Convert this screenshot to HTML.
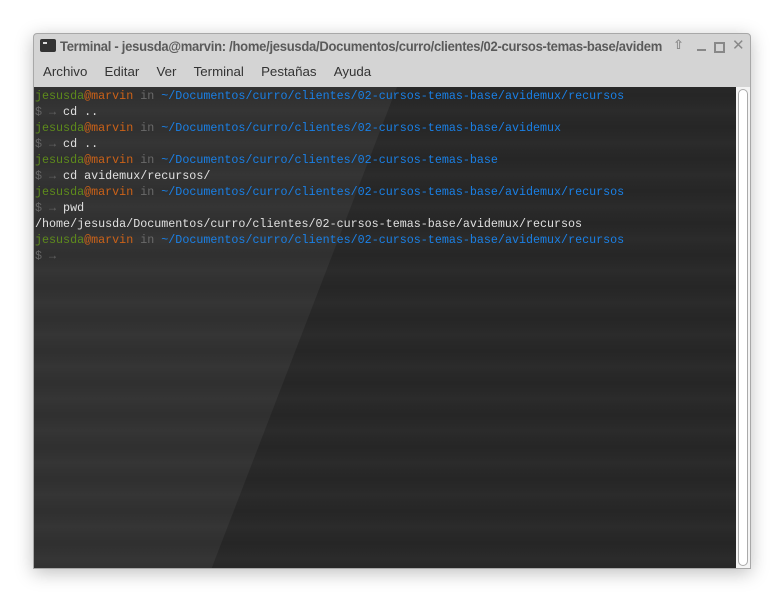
<!DOCTYPE html>
<html><head><meta charset="utf-8"><style>
html,body{margin:0;padding:0;width:779px;height:601px;background:#fff;overflow:hidden}
.win{position:absolute;left:33px;top:33px;width:718px;height:536px;background:#d4d4d4;border:1px solid #a8a8a8;border-radius:4px 4px 0 0;box-shadow:0 4px 18px rgba(0,0,0,.25);box-sizing:border-box;overflow:hidden}
.title{position:absolute;left:0;top:0;width:100%;height:24px;font-family:"Liberation Sans",sans-serif;font-weight:bold;font-size:14px;color:#5a5a5a;line-height:24px;white-space:nowrap;overflow:hidden}
.title span{position:absolute;left:26px;top:0;width:650px;overflow:hidden;letter-spacing:-0.3px;transform:scaleX(0.93);transform-origin:left}
.icon{position:absolute;left:6px;top:5px;width:16px;height:13px;background:#333;border-radius:2px}
.icon:after{content:"";position:absolute;left:3px;top:3px;width:4px;height:2px;background:#ddd}
.menu{position:absolute;left:9px;top:24px;height:30px;font-family:"Liberation Sans",sans-serif;font-size:13.3px;color:#333;line-height:28px}
.menu b{font-weight:normal;margin-right:17.2px}
.term{position:absolute;left:0;top:53px;width:702px;height:483px;background:#282828;overflow:hidden}
.light{position:absolute;left:0;top:0;width:702px;height:483px;background:#323232;clip-path:polygon(0 0,363px 0,177px 483px,0 483px)}
.stripes{position:absolute;left:0;top:0;width:702px;height:483px;background:repeating-linear-gradient(180deg,rgba(0,0,0,0) 0,rgba(0,0,0,.05) 8px,rgba(0,0,0,0) 16px,rgba(255,255,255,.015) 24px,rgba(0,0,0,0) 32px)}
pre{position:absolute;left:1px;top:1px;margin:0;font-family:"Liberation Mono",monospace;font-size:11.7px;line-height:16px;color:#e0e0e0}
.g{color:#5e8b1c}.o{color:#cc6218}.i{color:#6a6a6a}.b{color:#1a80e6}.d{color:#666}
.sb{position:absolute;left:702px;top:53px;width:14px;height:483px;background:#f4f4f4}
.th{position:absolute;left:2px;top:2px;width:10px;height:477px;border:1px solid #aaa;border-radius:5px;background:#fff;box-sizing:border-box}
.btn{position:absolute;font-family:"DejaVu Sans",sans-serif;color:#888}
</style></head><body>
<div class="win">
<div class="title"><div class="icon"></div><span>Terminal - jesusda@marvin: /home/jesusda/Documentos/curro/clientes/02-cursos-temas-base/avidem</span></div>
<div class="btn" style="left:639px;top:4px;font-size:13px;font-weight:bold">⇧</div>
<div style="position:absolute;left:663px;top:15px;width:9px;height:2px;background:#888"></div>
<div style="position:absolute;left:680px;top:8px;width:7px;height:7px;border:2px solid #888"></div>
<div class="btn" style="left:698px;top:2px;font-size:15px">✕</div>
<div class="menu"><b>Archivo</b><b>Editar</b><b>Ver</b><b>Terminal</b><b>Pestañas</b><b>Ayuda</b></div>
<div class="term"><div class="light"></div><div class="stripes"></div>
<pre><span class="g">jesusda</span><span class="o">@marvin</span> <span class="i">in</span> <span class="b">~/Documentos/curro/clientes/02-cursos-temas-base/avidemux/recursos</span>
<span class="d">$ →</span> cd ..
<span class="g">jesusda</span><span class="o">@marvin</span> <span class="i">in</span> <span class="b">~/Documentos/curro/clientes/02-cursos-temas-base/avidemux</span>
<span class="d">$ →</span> cd ..
<span class="g">jesusda</span><span class="o">@marvin</span> <span class="i">in</span> <span class="b">~/Documentos/curro/clientes/02-cursos-temas-base</span>
<span class="d">$ →</span> cd avidemux/recursos/
<span class="g">jesusda</span><span class="o">@marvin</span> <span class="i">in</span> <span class="b">~/Documentos/curro/clientes/02-cursos-temas-base/avidemux/recursos</span>
<span class="d">$ →</span> pwd
/home/jesusda/Documentos/curro/clientes/02-cursos-temas-base/avidemux/recursos
<span class="g">jesusda</span><span class="o">@marvin</span> <span class="i">in</span> <span class="b">~/Documentos/curro/clientes/02-cursos-temas-base/avidemux/recursos</span>
<span class="d">$ →</span></pre></div>
<div class="sb"><div class="th"></div></div>
</div>
</body></html>
